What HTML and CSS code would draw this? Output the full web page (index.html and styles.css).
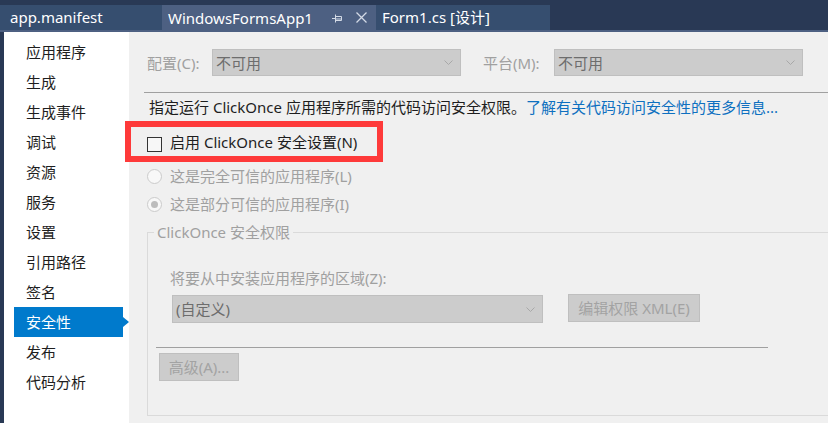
FILE: index.html
```html
<!DOCTYPE html>
<html lang="zh-CN">
<head>
<meta charset="utf-8">
<title>WindowsFormsApp1 - 安全性</title>
<link rel="stylesheet" href="styles.css">
</head>
<body>
<div class="window">
  <div class="tabbar">
    <div class="tab">app.manifest</div>
    <div class="tab tab-active">
      <span class="tab-title">WindowsFormsApp1</span>
      <svg class="pin" width="11" height="10" viewBox="0 0 11 10"><path d="M0 5.5H3.5M3.5 1.5V9.5M3.5 3.5H9.5V7.5H3.5M3.5 6H9.5" fill="none" stroke="#d3dae6" stroke-width="1"/></svg>
      <svg class="close" width="11" height="11" viewBox="0 0 11 11"><path d="M0.5 0.5L10.5 10.5M10.5 0.5L0.5 10.5" fill="none" stroke="#d3dae6" stroke-width="1.3"/></svg>
    </div>
    <div class="tab tab-form">Form1.cs [设计]</div>
  </div>
  <div class="tab-strip"></div>
  <div class="main">
    <div class="edge"></div>
    <nav class="nav">
      <div class="nav-item">应用程序</div>
      <div class="nav-item">生成</div>
      <div class="nav-item">生成事件</div>
      <div class="nav-item">调试</div>
      <div class="nav-item">资源</div>
      <div class="nav-item">服务</div>
      <div class="nav-item">设置</div>
      <div class="nav-item">引用路径</div>
      <div class="nav-item">签名</div>
      <div class="nav-item selected">安全性</div>
      <div class="nav-item">发布</div>
      <div class="nav-item">代码分析</div>
    </nav>
    <section class="content">
      <div class="config-row">
        <span class="label label-config">配置(C):</span>
        <div class="select select-config"><span>不可用</span><svg class="chev" width="9" height="5" viewBox="0 0 9 5"><path d="M0.5 0.5L4.5 4.5L8.5 0.5" fill="none" stroke="#a8a8a8" stroke-width="1"/></svg></div>
        <span class="label label-platform">平台(M):</span>
        <div class="select select-platform"><span>不可用</span><svg class="chev" width="9" height="5" viewBox="0 0 9 5"><path d="M0.5 0.5L4.5 4.5L8.5 0.5" fill="none" stroke="#a8a8a8" stroke-width="1"/></svg></div>
      </div>
      <div class="rule"></div>
      <p class="desc">指定运行 ClickOnce 应用程序所需的代码访问安全权限。<a class="link" href="#">了解有关代码访问安全性的更多信息...</a></p>
      <div class="check-row">
        <span class="checkbox"></span>
        <span class="check-text">启用 ClickOnce 安全设置(N)</span>
        <div class="mark"></div>
      </div>
      <div class="radio-row radio-full"><span class="radio"></span><span>这是完全可信的应用程序(L)</span></div>
      <div class="radio-row radio-partial"><span class="radio checked"></span><span>这是部分可信的应用程序(I)</span></div>
      <fieldset class="group">
        <legend class="group-title">ClickOnce 安全权限</legend>
        <div class="zone-label">将要从中安装应用程序的区域(Z):</div>
        <div class="zone-row">
          <div class="select select-zone"><span>(自定义)</span><svg class="chev" width="9" height="5" viewBox="0 0 9 5"><path d="M0.5 0.5L4.5 4.5L8.5 0.5" fill="none" stroke="#a8a8a8" stroke-width="1"/></svg></div>
          <div class="btn btn-xml">编辑权限 XML(E)</div>
        </div>
        <div class="group-rule"></div>
        <div class="btn btn-adv">高级(A)...</div>
      </fieldset>
    </section>
  </div>
</div>
</body>
</html>
```

FILE: styles.css
```css
html, body {
  margin: 0;
  padding: 0;
}

body {
  font-family: "Noto Sans", "Noto Sans CJK SC", sans-serif;
  font-size: 15px;
  background: #f0f0f0;
}

.window {
  width: 828px;
  height: 423px;
  overflow: hidden;
  display: flex;
  flex-direction: column;
}

/* ---------- document tabs ---------- */
.tabbar {
  height: 30px;
  box-sizing: border-box;
  padding-top: 5px;
  background: #293955;
  display: flex;
  align-items: flex-end;
}

.tab {
  height: 25px;
  line-height: 24px;
  box-sizing: border-box;
  width: 162px;
  padding-left: 10px;
  color: #ffffff;
  background: #364e6f;
  white-space: nowrap;
}

.tab-active {
  width: 214px;
  padding-left: 6px;
  background: #4d6082;
  display: flex;
  align-items: center;
}

.pin {
  margin-left: auto;
  flex: none;
}

.close {
  margin-left: 13px;
  margin-right: 9px;
  flex: none;
}

.tab-form {
  width: 174px;
  padding-left: 6px;
}

.tab-strip {
  height: 2px;
  background: #4d6082;
}

/* ---------- main ---------- */
.main {
  flex: 1;
  display: flex;
  min-height: 0;
}

.edge {
  width: 4px;
  background: #293955;
}

.nav {
  width: 125px;
  box-sizing: border-box;
  padding-top: 5px;
  background: #ffffff;
}

.nav-item {
  position: relative;
  height: 30px;
  line-height: 30px;
  width: 109px;
  margin-left: 10px;
  padding-left: 12px;
  box-sizing: border-box;
  color: #1e1e1e;
}

.nav-item.selected {
  background: #007acc;
  color: #ffffff;
}

.nav-item.selected::after {
  content: "";
  position: absolute;
  right: -6px;
  top: 10px;
  border-left: 6px solid #007acc;
  border-top: 5px solid transparent;
  border-bottom: 5px solid transparent;
}

/* ---------- content ---------- */
.content {
  flex: 1;
  background: #f0f0f0;
  padding: 17px 0 0 18px;
  color: #1e1e1e;
  line-height: 20px;
  min-width: 0;
}

.config-row {
  display: flex;
  align-items: center;
  height: 27px;
}

.label {
  color: #a0a0a0;
  flex: none;
}

.label-config {
  width: 65px;
}

.label-platform {
  width: 71px;
  margin-left: 22px;
}

.select {
  box-sizing: border-box;
  background: #cccccc;
  border: 1px solid #bfbfbf;
  color: #6d6d6d;
  display: flex;
  align-items: center;
  padding: 0 7px 0 3px;
  flex: none;
}

.select span {
  flex: 1;
}

.chev {
  flex: none;
}

.select-config,
.select-platform {
  width: 249px;
  height: 27px;
}

.rule {
  height: 1px;
  background: #a0a0a0;
  margin: 16px 0 0 -3px;
}

.desc {
  margin: 4px 0 0 2px;
  white-space: nowrap;
}

.link {
  color: #0e70c0;
  text-decoration: none;
}

.check-row {
  position: relative;
  display: flex;
  align-items: center;
  margin-top: 15px;
  height: 20px;
}

.checkbox {
  width: 15px;
  height: 15px;
  box-sizing: border-box;
  border: 1px solid #333333;
  background: #f7f7f7;
  margin-top: 5px;
  flex: none;
}

.check-text {
  margin-left: 8px;
}

.mark {
  position: absolute;
  left: -22px;
  top: -11px;
  width: 258px;
  height: 41px;
  box-sizing: border-box;
  border: 6px solid #fe3a3a;
  pointer-events: none;
}

.radio-row {
  display: flex;
  align-items: center;
  height: 20px;
  color: #a0a0a0;
}

.radio-full {
  margin-top: 14px;
}

.radio-partial {
  margin-top: 8px;
}

.radio {
  width: 15px;
  height: 15px;
  box-sizing: border-box;
  border-radius: 50%;
  border: 1px solid #cbcbcb;
  background: #f8f8f8;
  margin-right: 8px;
  flex: none;
  display: flex;
  align-items: center;
  justify-content: center;
}

.radio.checked::after {
  content: "";
  width: 7px;
  height: 7px;
  border-radius: 50%;
  background: #bdbdbd;
}

/* ---------- group ---------- */
.group {
  margin: 8px -20px 0 0;
  padding: 0 0 34px 0;
  border: 1px solid #dadada;
  min-width: 0;
}

.group-title {
  margin-left: 6px;
  padding: 0 3px;
  color: #a0a0a0;
  line-height: 20px;
}

.zone-label {
  color: #a0a0a0;
  margin: 26px 0 0 22px;
}

.zone-row {
  display: flex;
  align-items: flex-start;
  margin: 7px 0 0 24px;
}

.select-zone {
  width: 371px;
  height: 28px;
}

.btn {
  box-sizing: border-box;
  height: 28px;
  background: #cccccc;
  border: 1px solid #bfbfbf;
  color: #a3a3a3;
  display: flex;
  align-items: center;
  justify-content: center;
  flex: none;
}

.btn-xml {
  width: 132px;
  margin: -1px 0 0 25px;
}

.group-rule {
  width: 612px;
  height: 1px;
  background: #a0a0a0;
  margin: 24px 0 0 8px;
}

.btn-adv {
  width: 80px;
  margin: 5px 0 0 11px;
}
```
